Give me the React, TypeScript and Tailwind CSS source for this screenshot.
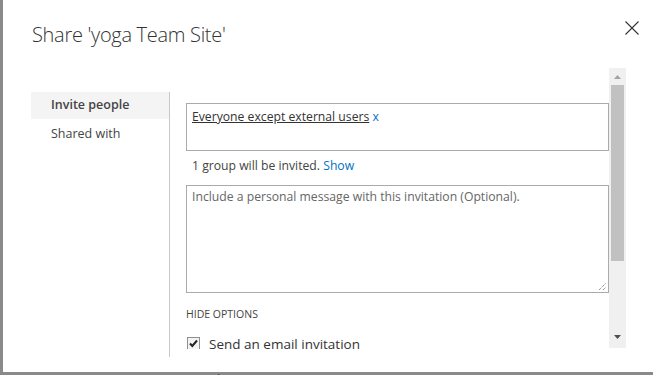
const font = { fontFamily: '"Open Sans", "Noto Sans", Arial, sans-serif' };

function CloseIcon() {
  return (
    <svg width="14" height="14" viewBox="0 0 14 14">
      <path d="M0.5 0.5 L13.5 13.5 M13.5 0.5 L0.5 13.5" stroke="#333" strokeWidth="1.1" />
    </svg>
  );
}

function Checkbox() {
  return (
    <svg width="13" height="13" viewBox="0 0 13 13" className="shrink-0">
      <rect x="0.5" y="0.5" width="12" height="12" fill="#f2f2f2" stroke="#8f8f8f" />
      <path d="M3 6.5 L5.3 9 L10 3.5" fill="none" stroke="#222" strokeWidth="2" />
    </svg>
  );
}

function ResizeGrip() {
  return (
    <svg width="9" height="9" viewBox="0 0 9 9" className="absolute right-[1px] bottom-[1px]">
      <path d="M1 8 L8 1 M5 8 L8 5" stroke="#666" strokeWidth="1" strokeDasharray="1 1" />
    </svg>
  );
}

function Scrollbar() {
  return (
    <div className="w-[17px] h-[280px] bg-[#f0f0f0] flex flex-col items-center shrink-0">
      <div className="h-[17px] w-full flex items-center justify-center">
        <svg width="7" height="4" viewBox="0 0 7 4">
          <path d="M0 4 L3.5 0 L7 4 Z" fill="#a3a3a3" />
        </svg>
      </div>
      <div className="w-[13px] h-[176px] bg-[#c1c1c1]" />
      <div className="flex-1" />
      <div className="h-[17px] w-full flex items-center justify-center mb-[3px]">
        <svg width="7" height="4" viewBox="0 0 7 4">
          <path d="M0 0 L7 0 L3.5 4 Z" fill="#505050" />
        </svg>
      </div>
    </div>
  );
}

export default function App() {
  return (
    <div className="w-[653px] h-[375px] bg-[#8a8a8a] overflow-hidden" style={font}>
      <div className="ml-[3px] w-[650px] h-[372px] bg-white flex flex-col">
        {/* Header */}
        <div className="h-[68px] flex items-start justify-between shrink-0">
          <h1 className="pl-[29px] pt-[21px] text-[20px] leading-[28px] font-light text-[#333] tracking-[-0.3px]">
            Share 'yoga Team Site'
          </h1>
          <button className="mt-[21px] mr-[14px]">
            <CloseIcon />
          </button>
        </div>

        {/* Body */}
        <div className="flex flex-1 min-h-0">
          <nav className="ml-[28px] mt-[24px] w-[139px] h-[265px] border-r border-[#c8c8c8] shrink-0">
            <div className="h-[27px] bg-[#f4f4f4] pl-[20px] flex items-center text-[12.5px] font-semibold text-[#444]">
              Invite people
            </div>
            <div className="h-[29px] pl-[20px] pt-[2px] flex items-center text-[12.5px] text-[#444]">
              Shared with
            </div>
          </nav>

          <div className="w-[439px] h-[281px] overflow-hidden pl-[16px] pt-[35px] text-[12.2px] text-[#444]">
            <div className="w-[423px] h-[48px] border border-[#ababab] pl-[5px] pt-[4px]">
              <span className="underline text-[#333]">Everyone except external users</span>{" "}
              <span className="text-[#0072c6]">x</span>
            </div>
            <div className="mt-[6px] h-[18px] pl-[6px] leading-[18px]">
              1 group will be invited. <span className="text-[#0072c6]">Show</span>
            </div>
            <div className="relative mt-[10px] w-[423px] h-[108px] border border-[#ababab] pl-[5px] pt-[2px] text-[#666]">
              Include a personal message with this invitation (Optional).
              <ResizeGrip />
            </div>
            <div className="mt-[14px] text-[10.5px] leading-[14px] text-[#444]">HIDE OPTIONS</div>
            <div className="mt-[16px] flex items-start gap-[9px] pl-[1px]">
              <Checkbox />
              <span className="mt-[-3px] text-[13.5px] leading-[20px] text-[#333]">Send an email invitation</span>
            </div>
          </div>

          <Scrollbar />
        </div>
      </div>
      <div className="pl-[203px] text-[13px] leading-[14px] text-[#333]">February 18</div>
    </div>
  );
}
